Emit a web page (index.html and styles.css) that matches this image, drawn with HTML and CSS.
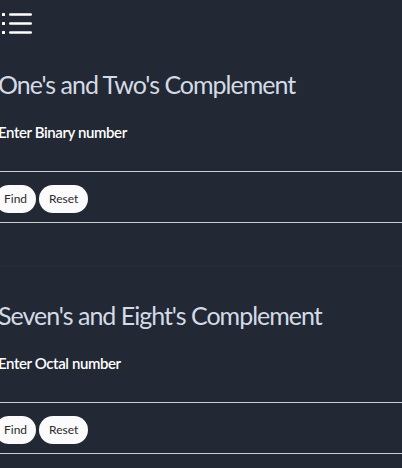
FILE: index.html
```html
<!DOCTYPE html>
<html>
<head>
<meta charset="utf-8">
<link rel="stylesheet" href="styles.css">
</head>
<body>
<div class="page">
  <nav class="nav">
    <svg class="menu-icon" width="32" height="24" viewBox="0 0 32 24">
      <rect x="2" y="1" width="3" height="3" rx="0.6" fill="#fff"/>
      <rect x="9" y="1.3" width="23" height="2.4" rx="1.2" fill="#fff"/>
      <rect x="2" y="10" width="3" height="3" rx="0.6" fill="#fff"/>
      <rect x="9" y="10.3" width="23" height="2.4" rx="1.2" fill="#fff"/>
      <rect x="2" y="19" width="3" height="3" rx="0.6" fill="#fff"/>
      <rect x="9" y="19.3" width="23" height="2.4" rx="1.2" fill="#fff"/>
    </svg>
  </nav>
  <section class="card">
    <h1 class="title">One's and Two's Complement</h1>
    <label class="label">Enter Binary number</label>
    <div class="rule"></div>
    <div class="actions">
      <button class="btn btn-find">Find</button>
      <button class="btn">Reset</button>
    </div>
    <div class="rule"></div>
  </section>
  <section class="card second">
    <h1 class="title">Seven's and Eight's Complement</h1>
    <label class="label">Enter Octal number</label>
    <div class="rule"></div>
    <div class="actions">
      <button class="btn btn-find">Find</button>
      <button class="btn">Reset</button>
    </div>
    <div class="rule"></div>
  </section>
</div>
</body>
</html>
```
FILE: styles.css
```css
html, body {
  margin: 0;
  padding: 0;
  background: #222834;
  overflow: hidden;
}
.page {
  font-family: "Lato", "Open Sans", sans-serif;
  margin-left: -2px;
}
.nav {
  padding: 12px 0 0 0;
  height: 24px;
}
.menu-icon {
  display: block;
  margin-left: 2px;
}
.card {
  display: flex;
  flex-direction: column;
}
.title {
  margin: 31px 0 0 0;
  font-weight: 400;
  font-size: 25px;
  line-height: 34px;
  color: #d3dbe6;
  letter-spacing: -1px;
}
.label {
  margin-top: 22px;
  font-size: 15px;
  font-weight: 600;
  letter-spacing: -0.4px;
  line-height: 18px;
  color: #ffffff;
}
.rule {
  height: 1px;
  background: #c9cdd4;
  margin-left: -10px;
}
.label + .rule {
  margin-top: 30px;
}
.actions {
  display: flex;
  gap: 3px;
  padding: 13px 0 9px 0;
}
.btn {
  box-sizing: border-box;
  font-family: "Lato", "Open Sans", sans-serif;
  height: 28px;
  border: none;
  border-radius: 14px;
  background: #fbfbfb;
  color: #2a2a2a;
  font-size: 12px;
  line-height: 14px;
  padding: 7px 10px;
}
.btn-find {
  margin-left: -3px;
  padding: 7px 9px;
}
.second {
  margin-top: 43px;
  border-top: 1px solid #262d39;
}
```
